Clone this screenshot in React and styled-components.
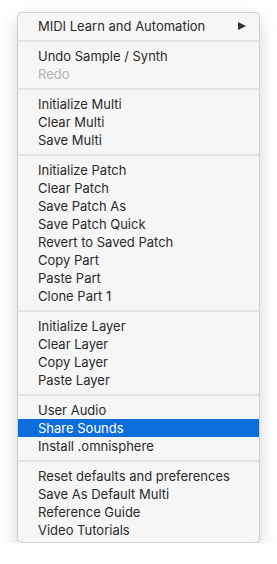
import styled, { createGlobalStyle } from "styled-components";

const groups = [
	[{ label: "MIDI Learn and Automation", submenu: true }],
	[{ label: "Undo Sample / Synth" }, { label: "Redo", disabled: true }],
	[{ label: "Initialize Multi" }, { label: "Clear Multi" }, { label: "Save Multi" }],
	[
		{ label: "Initialize Patch" },
		{ label: "Clear Patch" },
		{ label: "Save Patch As" },
		{ label: "Save Patch Quick" },
		{ label: "Revert to Saved Patch" },
		{ label: "Copy Part" },
		{ label: "Paste Part" },
		{ label: "Clone Part 1" },
	],
	[{ label: "Initialize Layer" }, { label: "Clear Layer" }, { label: "Copy Layer" }, { label: "Paste Layer" }],
	[{ label: "User Audio" }, { label: "Share Sounds", active: true }, { label: "Install .omnisphere" }],
	[
		{ label: "Reset defaults and preferences" },
		{ label: "Save As Default Multi" },
		{ label: "Reference Guide" },
		{ label: "Video Tutorials" },
	],
];

const App = () => {
	return (
		<>
			<GlobalStyle />
			<Menu>
				{groups.map((group, gi) => (
					<Group key={gi}>
						{gi > 0 && <Separator />}
						{group.map((item) => (
							<Item key={item.label} $active={item.active} $disabled={item.disabled}>
								<span>{item.label}</span>
								{item.submenu && <Arrow />}
							</Item>
						))}
					</Group>
				))}
			</Menu>
		</>
	);
};

export default App;

// css
const GlobalStyle = createGlobalStyle`
	body {
		margin: 0;
		background: #ffffff;
		font-family: "Inter", "Liberation Sans", sans-serif;
	}
`;

const Menu = styled.div`
	width: 243px;
	margin: 12px 0 0 17px;
	padding: 4px 0 3px;
	box-sizing: border-box;
	background: #f6f6f6;
	border: 1px solid #d2d2d2;
	border-radius: 5px;
	box-shadow: 0 8px 18px rgba(0, 0, 0, 0.16), 0 0 2px rgba(0, 0, 0, 0.08);
	overflow: hidden;
`;

const Group = styled.div`
	display: flex;
	flex-direction: column;
`;

const Separator = styled.div`
	height: 12px;
	display: flex;
	align-items: center;

	&::after {
		content: "";
		flex: 1;
		height: 2px;
		background: #e3e3e3;
	}
`;

const Item = styled.div`
	height: 18px;
	display: flex;
	align-items: center;
	justify-content: space-between;
	padding: 0 13px 0 20px;
	font-size: 13px;
	color: ${(props) => (props.$active ? "#ffffff" : props.$disabled ? "#b4b4b4" : "#2a2a2a")};
	background: ${(props) => (props.$active ? "#0e6ddc" : "transparent")};
	white-space: nowrap;
`;

const Arrow = styled.span`
	width: 0;
	height: 0;
	border-top: 4.5px solid transparent;
	border-bottom: 4.5px solid transparent;
	border-left: 8px solid #333333;
`;
